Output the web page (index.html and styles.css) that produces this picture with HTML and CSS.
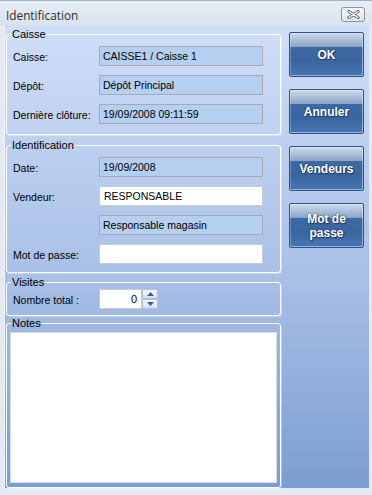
FILE: index.html
```html
<!DOCTYPE html>
<html lang="fr">
<head>
<meta charset="utf-8">
<title>Identification</title>
<link rel="stylesheet" href="styles.css">
</head>
<body>
<div class="window">
  <div class="titlebar">
    <span class="title">Identification</span>
    <button class="close" type="button" aria-label="Fermer">
      <svg width="13" height="9" viewBox="0 0 13 9"><path d="M2 1.5 L11 7.5 M11 1.5 L2 7.5" stroke="#5d6673" stroke-width="3.2" stroke-linecap="round"/><path d="M2 1.5 L11 7.5 M11 1.5 L2 7.5" stroke="#fdfdfd" stroke-width="1.4" stroke-linecap="round"/></svg>
    </button>
  </div>
  <div class="body">
    <div class="groups">
      <fieldset class="group">
        <legend>Caisse</legend>
        <div class="form form-caisse">
          <span class="label">Caisse:</span><div class="field ro">CAISSE1 / Caisse 1</div>
          <span class="label">Dépôt:</span><div class="field ro">Dépôt Principal</div>
          <span class="label">Dernière clôture:</span><div class="field ro">19/09/2008 09:11:59</div>
        </div>
      </fieldset>
      <fieldset class="group group-ident">
        <legend>Identification</legend>
        <div class="form form-ident">
          <span class="label">Date:</span><div class="field ro">19/09/2008</div>
          <span class="label">Vendeur:</span><div class="field edit">RESPONSABLE</div>
          <span class="label"></span><div class="field ro">Responsable magasin</div>
          <span class="label">Mot de passe:</span><div class="field edit"></div>
        </div>
      </fieldset>
      <fieldset class="group group-visites">
        <legend>Visites</legend>
        <div class="form form-visites">
          <span class="label">Nombre total :</span>
          <div class="spinner">
            <div class="spin-value">0</div>
            <div class="spin-btns">
              <span class="spin-btn"><svg width="7" height="4" viewBox="0 0 7 4"><path d="M0 4 L3.5 0 L7 4 Z" fill="#3d5f96"/></svg></span>
              <span class="spin-btn"><svg width="7" height="4" viewBox="0 0 7 4"><path d="M0 0 L7 0 L3.5 4 Z" fill="#3d5f96"/></svg></span>
            </div>
          </div>
        </div>
      </fieldset>
      <fieldset class="group group-notes">
        <legend>Notes</legend>
        <div class="notes-wrap">
          <textarea class="notes"></textarea>
        </div>
      </fieldset>
    </div>
    <div class="buttons">
      <button class="btn" type="button">OK</button>
      <button class="btn" type="button">Annuler</button>
      <button class="btn" type="button">Vendeurs</button>
      <button class="btn" type="button">Mot de<br>passe</button>
    </div>
  </div>
</div>
</body>
</html>
```
FILE: styles.css
```css
html, body {
  margin: 0;
  padding: 0;
}
body {
  width: 372px;
  height: 495px;
  overflow: hidden;
  font-family: "Liberation Sans", Arial, sans-serif;
  background: #e4eaf3;
}
.window {
  width: 372px;
  height: 495px;
  box-sizing: border-box;
  display: flex;
  flex-direction: column;
  background: #e4eaf3;
  border-top: 1px solid #a4b1c2;
}
.titlebar {
  height: 24px;
  flex: 0 0 24px;
  display: flex;
  align-items: flex-start;
  background: linear-gradient(to bottom, #e8eef6, #d9e2ee);
}
.title {
  font-family: "Open Sans", "Liberation Sans", sans-serif;
  font-size: 11.8px;
  line-height: 20px;
  margin-top: 4px;
  padding-left: 6px;
  color: #2e2e2e;
}
.close {
  margin: 6px 7px 0 auto;
  width: 24px;
  height: 15px;
  padding: 0;
  border: 1px solid #8b929c;
  border-radius: 3px;
  background: linear-gradient(to bottom, #f7f8fa, #e1e5eb);
  display: flex;
  align-items: center;
  justify-content: center;
}
.close svg { display: block; }
.body {
  flex: 1;
  margin: 0 3px 7px 4px;
  display: flex;
  border-left: 1px solid #eef3fa;
  background: linear-gradient(to bottom, #d0def8 0%, #a8bfe6 55%, #7c9dd1 100%);
}
.groups {
  flex: 0 0 275px;
  padding: 3px 0 0 1px;
  display: flex;
  flex-direction: column;
}
.group {
  margin: 0;
  padding: 0;
  min-width: 0;
  border: 1px solid #ffffff;
  border-radius: 3px;
  box-shadow: 1px 1px 0 rgba(255, 255, 255, 0.35);
}
.group legend {
  font-size: 11px;
  line-height: 12px;
  margin-left: 4px;
  padding: 0 1px;
  color: #000;
}
.group-ident { margin-top: 4px; }
.group-visites { margin-top: 3px; }
.group-notes { margin-top: 1px; flex: 1; }
.form {
  display: grid;
  grid-template-columns: 86px 164px;
  grid-auto-rows: 20px;
  row-gap: 9px;
  align-items: center;
  padding-left: 6px;
}
.form-caisse { padding-top: 6px; padding-bottom: 10px; }
.form-ident { padding-top: 6px; padding-bottom: 8px; }
.form-visites { padding-top: 1px; padding-bottom: 6px; }
.label {
  font-size: 10.5px;
  color: #000;
  padding-top: 2px;
}
.field {
  height: 20px;
  box-sizing: border-box;
  font-size: 10.5px;
  line-height: 18px;
  padding-left: 3px;
  color: #000;
  white-space: nowrap;
  overflow: hidden;
}
.field.ro {
  background: #b4cfef;
  border: 1px solid #a5aab2;
}
.field.edit {
  background: #ffffff;
  border: 1px solid #c9cbcf;
  padding-left: 4px;
}
.spinner {
  display: flex;
  height: 20px;
}
.spin-value {
  width: 43px;
  box-sizing: border-box;
  background: #fff;
  border: 1px solid #c9cbcf;
  text-align: right;
  padding-right: 4px;
  font-size: 11px;
  line-height: 18px;
}
.spin-btns {
  width: 16px;
  display: flex;
  flex-direction: column;
}
.spin-btn {
  flex: 1;
  box-sizing: border-box;
  border: 1px solid #b3c0d4;
  background: linear-gradient(to bottom, #f3f6fb, #d6e0ee);
  display: flex;
  align-items: center;
  justify-content: center;
}
.spin-btn svg { display: block; }
.notes-wrap {
  padding: 3px 3px 4px 3px;
}
.notes {
  display: block;
  width: 267px;
  height: 151px;
  box-sizing: border-box;
  margin: 0;
  border: 1px solid #d3dbe7;
  background: #fff;
  resize: none;
}
.buttons {
  flex: 1;
  padding: 7px 0 0 8px;
  display: flex;
  flex-direction: column;
  gap: 12px;
}
.btn {
  width: 75px;
  height: 45px;
  padding: 0;
  border: 1px solid #2c5489;
  border-radius: 2px;
  background: linear-gradient(to bottom, #cfdaea 0%, #a9bcd7 18%, #8aa3c6 32%, #3e6aa4 33%, #3a659f 65%, #4676b3 100%);
  box-shadow: inset -1px -1px 0 rgba(220, 232, 250, 0.55), inset 1px 1px 0 rgba(255, 255, 255, 0.25);
  color: #ffffff;
  font-family: "Liberation Sans", Arial, sans-serif;
  font-weight: bold;
  font-size: 12px;
  line-height: 14px;
  text-shadow: 0 0 2px #1d3b66, 1px 1px 1px #1d3b66;
}
```
